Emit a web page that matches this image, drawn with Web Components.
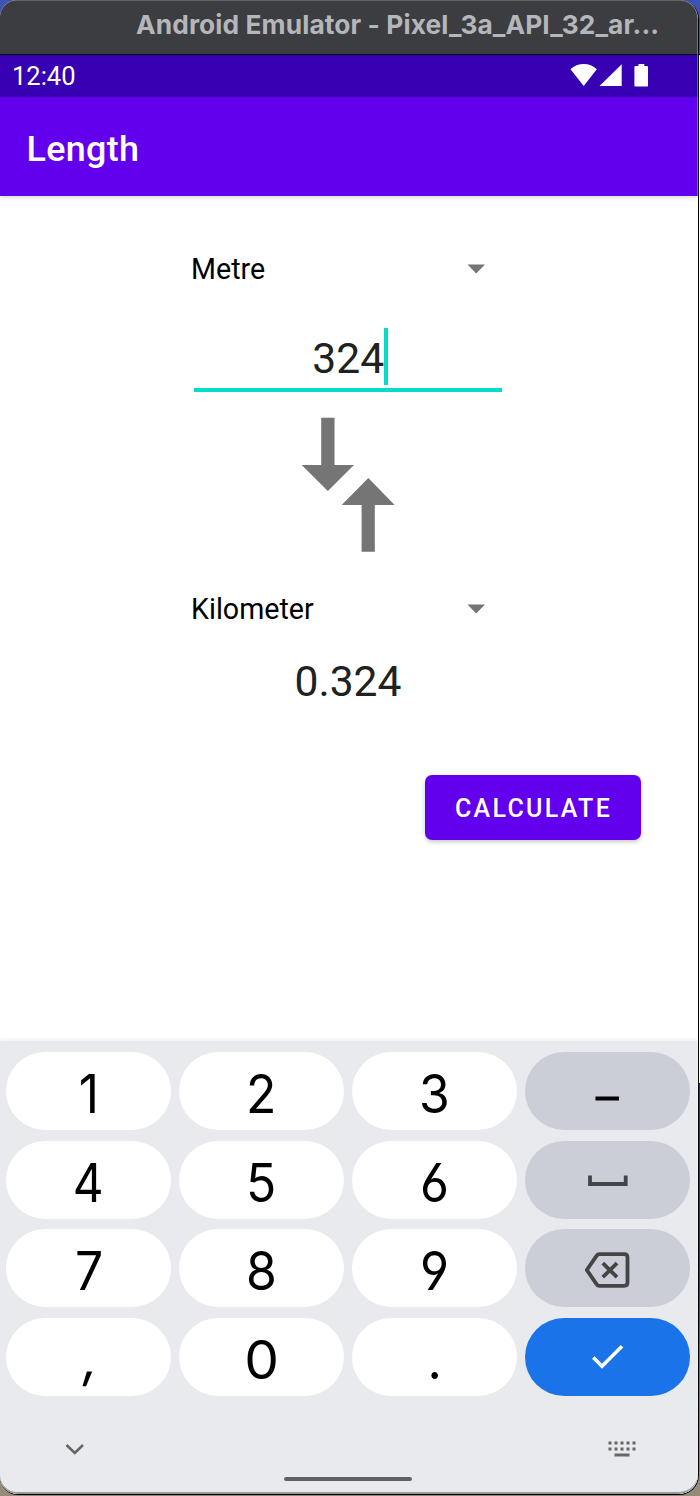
<!DOCTYPE html>
<html lang="en">
<head>
<meta charset="utf-8">
<title>Length</title>
<style>
html,body{margin:0;height:1496px;overflow:hidden}
body{width:700px;font-family:Roboto,"Liberation Sans",sans-serif;background:linear-gradient(#3e51b5 0 54px,#000 54px 55px,#fff 55px 1083px,#000 1083px 1084px,#33366a 1084px 1250px,#958b78 1450px 1496px)}
</style>
</head>
<body>
<emulator-window>
  <title-bar>Android Emulator - Pixel_3a_API_32_ar...</title-bar>
  <status-bar>12:40</status-bar>
  <app-bar>Length</app-bar>
  <converter-form></converter-form>
  <number-pad></number-pad>
</emulator-window>
<script>
function define(name, html) {
  customElements.define(name, class extends HTMLElement {
    constructor() {
      super();
      const t = document.createElement('template');
      t.innerHTML = html;
      this.attachShadow({mode: 'open'}).appendChild(t.content.cloneNode(true));
    }
  });
}

define('emulator-window', `<style>
:host{display:flex;flex-direction:column;position:relative;box-sizing:border-box;width:699px;height:1495px;border-right:1px solid #000;border-bottom:1px solid #000;border-radius:17px 19px 20px 18px;overflow:hidden;background:#fff}
:host::after{content:"";position:absolute;inset:0;border-radius:16px 18px 19px 17px;box-shadow:inset -1px 0 rgba(255,255,255,.3),inset 0 1px rgba(255,255,255,.2),inset 0 -2px #999a9c;pointer-events:none}
</style><slot></slot>`);

define('title-bar', `<style>
:host{display:block;box-sizing:border-box;height:55px;border-bottom:1px solid #000;padding-left:136px;background:#3c3d41;color:#b5b6ba;font:700 26.3px/50px Inter,sans-serif;white-space:nowrap}
span{letter-spacing:.1px}
</style><span><slot></slot></span>`);

define('status-bar', `<style>
:host{display:flex;align-items:center;justify-content:space-between;height:42px;padding:0 50px 0 12px;background:#3700b3;color:#fff;font-size:25.5px}
svg{display:block;fill:#fff}
</style><slot></slot>
<svg width="80" height="42" viewBox="0 0 80 42"><path d="M2.5 14.2C9.5 7.2 21.8 7.2 28.8 14.2L15.7 31Z"/><path d="M31.5 31L53.7 9.2V31Z"/><path d="M70.5 9h5.8v2h2.5q1.2 0 1.2 1.2v18.2q0 1.2-1.2 1.2H67.6q-1.2 0-1.2-1.2V12.2q0-1.2 1.2-1.2h2.9z"/></svg>`);

define('app-bar', `<style>
:host{display:flex;align-items:center;box-sizing:border-box;height:99px;flex:none;padding:5px 0 0 26.5px;background:#6200ee;color:#fff;font-size:35.9px;letter-spacing:.3px;font-weight:500;position:relative;box-shadow:0 1px 5px rgba(0,0,0,.18)}
</style><slot></slot>`);

define('unit-spinner', `<style>
:host{display:flex;align-items:center;justify-content:space-between;height:36px;padding-right:17px;font-size:28.6px;color:#000}
svg{display:block;fill:#757575}
</style><span><slot></slot></span><svg width="18" height="10"><path d="M.5 .5H18L9.2 9.5Z"/></svg>`);

define('amount-field', `<style>
:host{display:flex;align-items:center;justify-content:center;box-sizing:border-box;width:308px;height:64px;padding:0 0 1px 1px;border-bottom:4px solid #03dccb;border-image:linear-gradient(#8eeee5 0 25%,#03dccb 25%) 4;border-width:0 0 4px;font-size:42.6px;color:#212121}
i{width:4px;height:57px;margin:0 -3px 3px -.5px;background:#03dccb}
</style><span><slot></slot></span><i></i>`);

define('raised-button', `<style>
:host{display:flex;align-items:center;justify-content:center;box-sizing:border-box;width:216px;height:65px;border-radius:7px;padding:2px 0 0 1px;background:#6200ee;color:#fff;font-size:25px;font-weight:500;letter-spacing:2.3px;box-shadow:0 2px 4px rgba(0,0,0,.22)}
</style><slot></slot>`);

define('converter-form', `<style>
:host{display:flex;flex-direction:column;box-sizing:border-box;height:845px;flex:none;padding:55px 0 0;background:#fff}
.col{width:311px;margin-left:191px;display:flex;flex-direction:column}
amount-field{margin:41px 0 0 3px}
.swap{display:block;width:140px;height:170px;margin:8px 0 21px 89px;fill:#757575}
.result{margin:27px 0 0 3px;height:54px;line-height:54px;text-align:center;font-size:42.6px;color:#212121}
raised-button{margin:67px 0 0 425px}
</style>
<div class="col">
<unit-spinner>Metre</unit-spinner>
<amount-field>324</amount-field>
<svg class="swap" viewBox="0 0 140 170"><path d="M41.2 17.7H54.5V65H74L47.9 91 21.7 65H41.2Z"/><path d="M88.3 78L114.7 105H94.8V151.8H81.6V105H61.7Z"/></svg>
<unit-spinner>Kilometer</unit-spinner>
<div class="result">0.324</div>
</div>
<raised-button>CALCULATE</raised-button>`);

define('pad-key', `<style>
:host{display:flex;align-items:center;justify-content:center;height:78px;border-radius:39px;background:#fff;color:#000;font-family:Inter,sans-serif;font-size:53px;font-feature-settings:"cv03","cv04"}
:host([tone=grey]){background:#cbced7}
:host([tone=blue]){background:#1a73e8}
span{display:block;transform:scaleX(.94);padding-top:6px}
:host([glyph=zero]) span{transform:scaleX(1.04)}
:host([glyph=four]) span{transform:scaleX(.9)}
:host([glyph=comma]) span{transform:translate(2.5px,-2px) skewX(-8deg)}
::slotted(svg){display:block}
</style><span><slot></slot></span><slot name="icon"></slot>`);

define('number-pad', `<style>
:host{display:flex;flex-direction:column;box-sizing:border-box;height:453px;flex:none;padding:11px 8px 0 6px;background:#e8eaed;box-shadow:0 -1px 4px rgba(0,0,0,.08)}
.keys{display:grid;grid-template-columns:repeat(4,165px);gap:10.6px 8px}
.nav{display:flex;justify-content:space-between;align-items:center;height:36px;margin-top:35.2px;padding:0 54px 0 59px}
.home{width:128px;height:4px;border-radius:2px;background:#5f6265;margin:10px 0 0 278px}
svg{display:block}
</style>
<div class="keys">
<pad-key>1</pad-key><pad-key>2</pad-key><pad-key>3</pad-key>
<pad-key tone="grey"><svg slot="icon" width="165" height="78"><path d="M70.5 46.5H94" stroke="#000" stroke-width="4"/></svg></pad-key>
<pad-key glyph="four">4</pad-key><pad-key>5</pad-key><pad-key>6</pad-key>
<pad-key tone="grey"><svg slot="icon" width="165" height="78"><path d="M65 34.5V43H100.7V34.5" fill="none" stroke="#444" stroke-width="3.8"/></svg></pad-key>
<pad-key>7</pad-key><pad-key>8</pad-key><pad-key>9</pad-key>
<pad-key tone="grey"><svg slot="icon" width="165" height="78" fill="none" stroke="#444" stroke-width="3.8"><path d="M61.8 41L71.7 26.6Q72.7 25.2 74.4 25.2H99.2Q102.5 25.2 102.5 28.5V53.5Q102.5 56.8 99.2 56.8H74.4Q72.7 56.8 71.7 55.4Z" stroke-linejoin="round"/><path d="M77.8 34.2L92 48.2M92 34.2L77.8 48.2"/></svg></pad-key>
<pad-key glyph="comma">,</pad-key><pad-key glyph="zero">0</pad-key><pad-key>.</pad-key>
<pad-key tone="blue"><svg slot="icon" width="165" height="78"><path d="M68.3 39.5L77 48.2L97 28.3" fill="none" stroke="#fff" stroke-width="3.6"/></svg></pad-key>
</div>
<div class="nav">
<svg width="20" height="14"><path d="M1.5 3L9.8 11L18 3" fill="none" stroke="#666" stroke-width="2.5"/></svg>
<svg width="28" height="16" fill="#666"><path d="M.5 .5h3v3h-3zm6 0h3v3h-3zm6 0h3v3h-3zm6 0h3v3h-3zm6 0h3v3h-3zM.5 6.5h3v3h-3zm6 0h3v3h-3zm6 0h3v3h-3zm6 0h3v3h-3zm6 0h3v3h-3zM6.5 12.6h15v3h-15z"/></svg>
</div>
<div class="home"></div>`);
</script>
</body>
</html>
